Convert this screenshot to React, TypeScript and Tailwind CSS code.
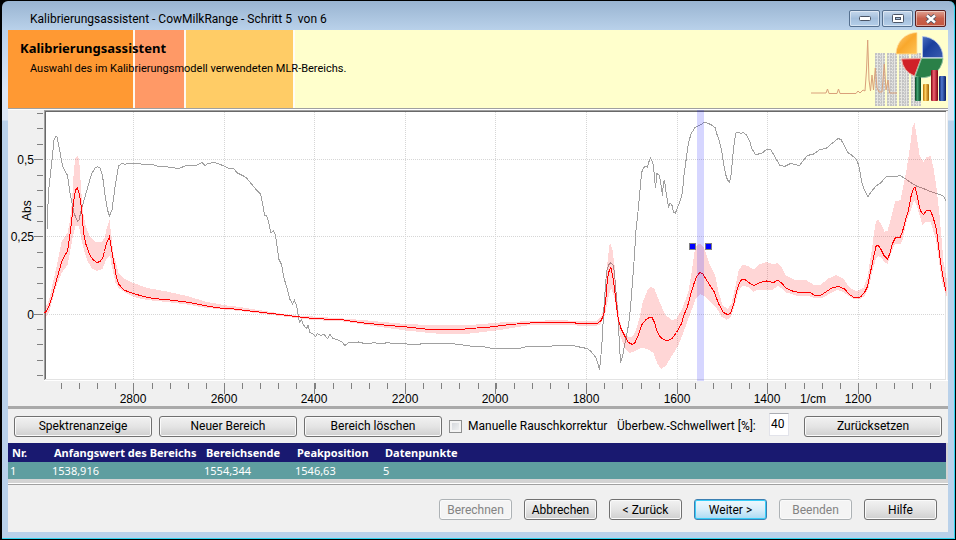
import type { ReactNode } from "react";

const SPECTRUM =
  "47,230 48.5,192 51.5,165 54,140 56,136.5 57,137 60,152 62.5,166 67.5,175.5 70,193 74,213 77.5,221.5 79,220 81.5,209 87.5,188 91.5,174 95,168 97.5,166.5 100,168 102.5,175.5 105,195 107.5,210 109.5,216 112,210 115,187 118.5,166 121,164 123,163.5 125.5,164.5 127,163.5 139.5,163.5 142,164.5 153,164.5 157,166 163,166 168,167 179,168.5 185,166 197,165 202,162.5 205,165.5 208,163.5 214,162.5 218,163.5 224,166 230,169 233.5,168.5 237.5,173 243.5,176 246.5,178 251.5,184 256.5,190 260.5,194 262.5,203 264.5,215.5 266,215 267.5,217.5 269.5,226.5 271,233 273.5,230.5 275.5,235.5 277.5,250 279,259.5 281.5,264.5 284,278 287.5,290 290,299.5 292.5,304 294.5,300.5 296.5,305 298.5,316.5 299.5,322.5 301.5,319.5 303.5,325 306.5,328.5 308,325.5 310,332.5 312.5,333.5 315.5,336.5 317.5,333.5 320.5,335.5 324,334.5 327.5,338.5 330,334.5 332.5,338 341.5,341.5 345,345.5 348.5,342.5 354,343 358.5,342 364.5,343.5 369,344 373.5,342.5 381.5,344 387.5,342.5 393,343.5 406.5,344 418,344.5 423,343.5 436,344 450,343.5 460,344.5 470,346 480,346 490,348 500,349 510,348.5 517,349 525,347 535,346 545,346.5 560,345.5 573,345.5 577,346.5 587,348.5 590.5,351 594.5,355.5 596.5,359 599.5,369.5 600.5,361 602,342 603.5,315 605,292 606.5,272 608.5,265 610.5,263 613,265 614.5,273 616,292 618,317 619.5,345 620.5,362.5 622.5,356.5 625,343 628.5,325 630.5,308 632.5,282 634.5,255 636,230 638.5,207 640.5,185 641.5,173 643.5,167.5 645.5,166.5 647.5,167 649,161.5 650.5,158 652,161 653.5,166 654.5,177 655.5,188 657,173.5 659.5,175.5 661,185 662.5,195.5 663.5,182 664.5,180.5 666,192 668.5,207 670,203 672,205.5 673.5,212 675.5,213 677.5,207.5 680,201.5 682.5,192 684,175 686.5,157 688.5,143 691,134 695,127.5 700,125 705,122 708.5,123.5 711.5,125 715,127.5 716.5,133 719,140 721.5,150 723.5,163 725.5,174 727.5,180 729.5,182.5 731.5,173 732.5,158 734.5,141 736,133 738.5,132.5 741,133.5 743.5,132.5 746.5,135 750,142 752,149 755.5,154.5 761.5,153.5 766.5,149.5 770.5,149.5 774,155 779.5,165 784.5,166.5 790.5,163.5 799.5,165.5 802.5,161.5 807.5,155.5 813.5,154 820,149.5 826,148.5 832.5,143 838,138.5 841,139.5 848.5,153.5 851,154.5 856,159 858.5,164.5 860.5,175 862.5,185 865.5,192.5 868,196.5 871.5,191.5 876,186 880.5,183 886.5,176.5 896.5,176.5 900,175.5 905,178.5 911.5,183 916.5,186 923.5,188.5 930,191.5 940,194.5 943.5,196.5 946.5,201.5";

const MEAN =
  "44.5,312.5 46.5,311.5 49.5,305 52.5,295 55.5,284 58.5,273 61.5,262.5 65,255 67.5,251.5 69.5,238 71.5,222 73.5,202 75.5,190 77.5,188 79.5,195 81.5,208 83.5,232 85.5,243 88,250 90.5,256.5 93.5,260 97,262.5 100,261.5 102.5,258.5 104.5,251.5 106.5,243.5 109.5,236.5 111.5,248.5 114,263.5 116,275 118.5,284 124,290 130,292.5 133.5,293.5 143.5,296.5 153.5,298.5 170,300 190,302.5 206.5,306 220,308 230,308.5 250,311 280,314.5 300,317 313.5,318.5 343.5,320 363.5,323 383.5,325 406.5,327 430,329.5 460,329.5 470,328.5 490,327 510,324.5 530,323 545,322 560,322.5 573,322.5 578,323.5 597.5,323.5 601.5,320 604,313 606,297 607.5,278 609.5,269.5 611,267.5 612.5,275 614.5,288 616.5,307 618.5,320 621,328.5 625,336.5 628.5,342.5 632.5,344.5 635,342.5 638.5,335 641.5,325 646,319.5 649.5,317.5 652,317.5 654.5,322.5 656.5,330 660.5,337.5 665,340 668.5,340.5 672.5,338 676.5,332.5 681.5,323.5 684,315 687.5,306.5 690.5,295 694,283.5 696.5,276.5 700,272.5 702.5,273.5 706.5,280 714,291.5 718.5,303.5 723.5,312.5 727.5,314.5 730.5,313.5 733.5,305 736.5,291.5 739.5,282.5 742,279.5 745.5,280 750,283.5 754.5,285.5 759.5,282.5 766.5,281 773.5,282.5 778,280 782,283.5 786,288 793.5,291.5 800,292.5 810,292.5 815,295.5 820.5,295.5 826.5,291.5 832.5,287.5 839,286.5 844.5,289 849.5,294.5 854,297.5 860.5,297 864.5,292.5 867.5,286.5 869.5,276.5 872,265 874,255 876,246.5 878,245 880.5,248.5 884,255.5 887.5,259 889.5,254.5 892.5,243.5 895.5,237.5 900,237.5 902.5,231.5 905.5,220 908.5,210 911,196.5 913.5,188.5 915,187.5 917,195 919,205 920.5,211 923.5,214.5 926.5,210.5 930.5,210.5 933.5,218.5 936.5,230 938.5,246 940.5,261.5 943.5,280 946,291";

const BAND_UPPER =
  "44.5,297 45.5,306 47,305 50,297 53,282 57,265 60,250 61.5,242 67.5,233 70,220 72,202 74,168 75.5,158 78,155 79.5,165 81,188 83.5,215 86,227 90,237 95,242 102,242 105,237 107,227 109.5,220 111.5,237 113.5,255 116,263 118.5,273 125,279 133.5,283 147,288 167,291.5 187,296 207,302 227,305.5 240,307 280,313.5 300,316 313,316.5 343,318.5 363,320 383,322 406,324 430,325 470,325 500,322.5 530,321 560,320 575,321 597,321 602,315 605,300 606,278 607.5,262 609.5,245 610.5,243.5 612.5,250 614.5,265 616.5,292 619.5,320 623,332 627.5,336.5 632.5,336.5 636,330 639.5,318 642.5,303 647.5,290.5 650.5,287 654.5,289 660,303 665,314.5 671.5,320 676.5,319 682.5,308 688.5,291.5 692,270 695,248 697,245 700.5,243.5 704,248 710,265 715,275 718.5,291.5 722.5,305 727.5,309 731.5,304 735,288 738.5,271 742.5,264.5 748.5,266.5 753.5,269.5 760,264 766.5,262 773,264 778,263 782,268 786,275.5 795,280 805,279.5 813.5,284.5 820,285 828.5,278.5 836,275 843.5,279 850,288 856.5,291 863.5,288 867.5,277 871.5,252 874,233.5 876,221 878.5,220 881.5,224.5 884.5,231.5 887.5,231 891.5,216.5 895,201.5 900.5,200 904,183 906.5,170 910,147 912.5,127 914.5,122.5 916.5,135 919.5,155 923.5,162 926.5,157 930.5,156 933.5,168 936.5,188 939.5,215 941.5,238 943.5,262 946.5,278";

const BAND_LOWER =
  "946.5,296 942,282 939,262 936,240 930.5,221.5 926.5,221.5 922.5,225 919.5,215 916.5,205 914,200.5 911.5,208 906.5,222 902.5,240 900.5,244 895,244 891.5,252 887.5,263.5 885,263 881.5,258 878,256 875.5,260 871.5,275 869,286.5 865,295.5 860,299 853,298.5 848,295.5 843,292 837,290 830,293.5 823,297.5 815,298.5 810,296.5 797,296 786.5,292.5 778,285.5 773,289.5 758,289.5 753,292 750,288 742.5,285.5 738.5,291.5 734,308 730.5,317.5 726.5,319.5 721.5,316.5 716.5,308 710,301 703.5,295.5 700,294 696,298 690.5,313 685,328 678.5,345 671.5,356.5 666,365.5 661.5,369 657.5,364 653.5,353 647.5,349 641.5,348 635,351 629.5,353 625,348 620.5,336.5 617.5,320 614.5,298 611,288 608.5,297 605,315 600.5,324.5 596.5,325.5 577,325.5 560,324.5 530,325 500,330 470,333.5 446.5,334.5 430,333 406.5,330.5 380,327 343.5,321.5 313,320 280,316 240,311 207,308 187,304.5 167,302 147,300 133.5,297 125,292.5 118.5,288 115.5,282.5 111.5,265 110,255 106,260 102.5,269 97,271 91.5,268 87,260 84,250 81.5,240 79,226 75.5,226 72.5,238 69.5,255 67.5,265 61.5,273 55,290 49.5,311 46.5,316 44.5,321";

const X_TICKS = [133, 224, 314, 405, 495, 586, 677, 767, 858];
const X_MINOR = Array.from({ length: 49 }, (_, i) => Math.round(61 + i * 18.11));
const X_LABELS = ["2800", "2600", "2400", "2200", "2000", "1800", "1600", "1400", "1200"];
const Y_TICKS = [
  { y: 159, label: "0,5" },
  { y: 236, label: "0,25" },
  { y: 314, label: "0" },
];
const Y_MINOR = [113, 128, 144, 175, 190, 206, 221, 252, 267, 283, 298, 329, 344, 360, 375];

function Chart() {
  return (
    <svg viewBox="8 110 940 296" className="block h-auto w-full bg-[#f0f0f0]" role="img" aria-label="Spektrum">
      <g shapeRendering="crispEdges">
        <rect x="45" y="111" width="901" height="269" fill="#fff" />
        <path d="M133.5 112V379M224.5 112V379M314.5 112V379M405.5 112V379M495.5 112V379M586.5 112V379M677.5 112V379M767.5 112V379M858.5 112V379" stroke="#d6d6d6" strokeDasharray="1 1" />
        <path d="M47 159.5H945M47 236.5H945M47 314.5H945" stroke="#d6d6d6" strokeDasharray="1 1" />
        <path d="M44 110.5H948M44.5 110V380" stroke="#a0a0a0" />
        <path d="M45 111.5H946M45.5 111V379" stroke="#696969" />
        <path d="M45 379.5H946M945.5 112V380" stroke="#e3e3e3" />
        <path d="M44 380.5H948M946.5 112V381" stroke="#fff" />
        {X_MINOR.map((x) => (
          <rect key={x} x={x} y="383" width="1" height="6" fill="#808080" />
        ))}
        {X_TICKS.map((x) => (
          <rect key={x} x={x} y="383" width="1" height="11" fill="#808080" />
        ))}
        {Y_MINOR.map((y) => (
          <rect key={y} x="37" y={y} width="6" height="1" fill="#808080" />
        ))}
        {Y_TICKS.map((t) => (
          <rect key={t.y} x="34" y={t.y} width="9" height="1" fill="#808080" />
        ))}
        <polyline points={SPECTRUM} fill="none" stroke="#a0a0a0" />
        <polygon points={BAND_UPPER + " " + BAND_LOWER} fill="#ff0000" fillOpacity="0.16" />
        <polyline points={MEAN} fill="none" stroke="#ff0000" />
        <rect x="697" y="110" width="7" height="271" fill="#0000ff" fillOpacity="0.16" />
        <rect x="689.5" y="243.5" width="6" height="6" fill="#0000ff" stroke="#808080" />
        <rect x="705.5" y="243.5" width="6" height="6" fill="#0000ff" stroke="#808080" />
      </g>
      <g className="font-['Liberation_Sans',Arial,sans-serif] text-[12px]" fill="#000">
        {X_TICKS.map((x, i) => (
          <text key={x} x={x} y="403" textAnchor="middle">
            {X_LABELS[i]}
          </text>
        ))}
        <text x="813" y="403" textAnchor="middle">
          1/cm
        </text>
        {Y_TICKS.map((t) => (
          <text key={t.y} x="34" y={t.y + 5} textAnchor="end">
            {t.label}
          </text>
        ))}
        <text transform="translate(31 221) rotate(-90)">Abs</text>
      </g>
    </svg>
  );
}

function Logo() {
  return (
    <svg width="138" height="78" viewBox="810 30 138 78" className="ml-auto shrink-0" aria-hidden="true">
      <defs>
        <pattern id="digits" width="12" height="3" patternUnits="userSpaceOnUse" x="875" y="53">
          <rect width="10" height="3" fill="#e6e6e2" />
          <path d="M0 1H2M3 1H5M6 1H7M8 1H10" stroke="#a2a2a6" />
          <path d="M0 2H1M3 2H4M5 2H7M8 2H9" stroke="#bcbcc0" />
        </pattern>
        <linearGradient id="pieYellow" x1="0" y1="0" x2="1" y2="1">
          <stop offset="0" stopColor="#ffd080" />
          <stop offset="0.5" stopColor="#f9a82c" />
          <stop offset="1" stopColor="#ffc456" />
        </linearGradient>
        <linearGradient id="pieBlue" x1="0" y1="0" x2="1" y2="1">
          <stop offset="0" stopColor="#4a6fc0" />
          <stop offset="0.4" stopColor="#1a3f9c" />
          <stop offset="1" stopColor="#3a5cb0" />
        </linearGradient>
        <linearGradient id="barGreen">
          <stop offset="0" stopColor="#064020" />
          <stop offset="0.4" stopColor="#3fa070" />
          <stop offset="1" stopColor="#064020" />
        </linearGradient>
        <linearGradient id="barYellow">
          <stop offset="0" stopColor="#b87000" />
          <stop offset="0.4" stopColor="#ffd060" />
          <stop offset="1" stopColor="#a06000" />
        </linearGradient>
        <linearGradient id="barRed">
          <stop offset="0" stopColor="#800010" />
          <stop offset="0.4" stopColor="#f06070" />
          <stop offset="1" stopColor="#800010" />
        </linearGradient>
        <linearGradient id="barBlue">
          <stop offset="0" stopColor="#081c60" />
          <stop offset="0.4" stopColor="#5078d0" />
          <stop offset="1" stopColor="#081c60" />
        </linearGradient>
      </defs>
      <rect x="875" y="53" width="46" height="53" fill="url(#digits)" />
      <path
        d="M811 93H826L827.5 89L829 93.5H837L838.5 89L840 93.5H856L858 91L860 93L863 90L865 91L866.5 70L867.7 40L869 80L870.5 91L872 75L873.5 90L875.3 68L877 88L879 92H882L884.3 64L886 90L888 80L889.5 93H897"
        fill="none"
        stroke="#d9a07a"
        strokeWidth="1"
      />
      <path d="M917 32.5V54H896A21 21.5 0 0 1 917 32.5Z" fill="url(#pieYellow)" stroke="#ffe0a0" strokeWidth="0.8" />
      <path d="M922.5 36.5A21 21 0 0 1 943 57.5H922.5Z" fill="url(#pieBlue)" stroke="#b8c8e8" strokeWidth="0.8" />
      <path d="M901.5 59L921 58.5L914.5 76A21 21 0 0 1 901.5 59Z" fill="#d02028" stroke="#f0a8a0" strokeWidth="1" />
      <path d="M921.5 58.5H943A21 21 0 0 1 915 76.5Z" fill="#2a8048" stroke="#8fc0a0" strokeWidth="1" />
      <rect x="915" y="77" width="6" height="24" rx="1" fill="url(#barGreen)" />
      <rect x="923" y="84" width="6" height="17" rx="1" fill="url(#barYellow)" />
      <rect x="931" y="70" width="7" height="31" rx="1" fill="url(#barRed)" />
      <rect x="939" y="76" width="7" height="25" rx="1" fill="url(#barBlue)" />
    </svg>
  );
}

function CaptionButton({ label, close, children }: { label: string; close?: boolean; children: ReactNode }) {
  const tone = close
    ? "border-[#5a1f1f] bg-linear-to-b from-[#dfa394] via-[#c8604c] via-50% to-[#c5573f]"
    : "border-[#55708f] bg-linear-to-b from-[#c6d8ec] via-[#a4bfdc] via-50% to-[#b5cfe9]";
  return (
    <button
      type="button"
      aria-label={label}
      className={"flex h-[17px] w-[31px] items-center justify-center rounded-[2px] border shadow-[inset_0_0_0_1px_rgba(255,255,255,0.45)] " + tone}
    >
      {children}
    </button>
  );
}

function PushButton({ children, size, variant = "normal" }: { children: ReactNode; size: "wide" | "small"; variant?: "normal" | "primary" | "disabled" }) {
  const tones = {
    normal: "border-[#707070] bg-linear-to-b from-[#f2f2f2] via-[#e4e4e4] via-50% to-[#cfcfcf] text-black shadow-[inset_0_0_0_1px_#fafafa]",
    primary: "border-[#3c7fb1] bg-linear-to-b from-[#eff8fd] via-[#d8eefa] via-50% to-[#aadaf3] text-black shadow-[inset_0_0_0_1px_#36cdf8]",
    disabled: "border-[#adb2b5] bg-[#f4f4f4] text-[#838383] shadow-[inset_0_0_0_1px_#fafafa]",
  };
  const sizes = { wide: "w-[138px]", small: "w-[73px]" };
  return (
    <button
      type="button"
      disabled={variant === "disabled"}
      className={"flex h-[21px] shrink-0 items-center justify-center rounded-[3px] border text-[12px] whitespace-nowrap " + sizes[size] + " " + tones[variant]}
    >
      {children}
    </button>
  );
}

export default function App() {
  return (
    <div className="flex min-h-screen flex-col bg-black pt-px pr-px pb-px pl-[2px] font-[Roboto,'Noto_Sans',sans-serif] text-[12px] text-black">
      <div className="flex grow flex-col rounded-t-[6px] border-r border-b border-[#2fd3ee] bg-[linear-gradient(#99b4d1,#b9d1ea_29px,#dce7f5_90px,#dce7f5_119px,#b9d1ea_120px)] px-[6px] pb-[6px]">
        <header className="flex h-[29px] items-center">
          <h1 className="pt-[7px] pl-[22px] text-[12px] leading-[16px] whitespace-pre">Kalibrierungsassistent - CowMilkRange - Schritt 5  von 6</h1>
          <div className="ml-auto flex gap-[2px] pt-[6px] pr-[2px]">
            <CaptionButton label="Minimieren">
              <svg width="12" height="5" viewBox="0 0 12 5">
                <rect x="0.5" y="0.5" width="11" height="4" rx="1" fill="#fff" stroke="#4b5566" />
              </svg>
            </CaptionButton>
            <CaptionButton label="Maximieren">
              <svg width="12" height="9" viewBox="0 0 12 9">
                <rect x="0.5" y="0.5" width="11" height="8" rx="1" fill="#fff" stroke="#4b5566" />
                <rect x="3.5" y="3.5" width="5" height="2" fill="#a4bfdc" stroke="#4b5566" />
              </svg>
            </CaptionButton>
            <CaptionButton label="Schließen" close>
              <svg width="12" height="10" viewBox="0 0 12 10">
                <path d="M2 1.5L10 8.5M10 1.5L2 8.5" stroke="#4b5566" strokeWidth="4.2" />
                <path d="M2 1.5L10 8.5M10 1.5L2 8.5" stroke="#fff" strokeWidth="2.4" />
              </svg>
            </CaptionButton>
          </div>
        </header>

        <main className="flex grow flex-col bg-[#f0f0f0]">
          <section className="relative flex h-[78px] bg-[#ffffcc]">
            <div className="w-[127px] border-r-2 border-[#fff8ee] bg-[#ff9933]" />
            <div className="w-[51px] border-r-2 border-[#fff8ee] bg-[#ff9966]" />
            <div className="w-[109px] border-r-2 border-[#fffdf4] bg-[#ffcc66]" />
            <Logo />
            <div className="absolute top-[9px] left-3">
              <h2 className="font-['Noto_Sans',sans-serif] text-[13px] leading-[18px] font-bold">Kalibrierungsassistent</h2>
              <p className="mt-1 ml-[10px] text-[11px] leading-[16px]">Auswahl des im Kalibrierungsmodell verwendeten MLR-Bereichs.</p>
            </div>
          </section>
          <div className="h-[2px] border-t border-[#a0a0a0] bg-white" />

          <Chart />

          <div className="h-[3px] bg-[#a9a9a9]" />

          <section className="flex h-[34px] items-center px-[6px]">
            <div className="flex gap-[7px]">
              <PushButton size="wide">Spektrenanzeige</PushButton>
              <PushButton size="wide">Neuer Bereich</PushButton>
              <PushButton size="wide">Bereich löschen</PushButton>
            </div>
            <input
              id="noise"
              type="checkbox"
              className="ml-[7px] size-[13px] shrink-0 appearance-none border border-[#8e8f8f] bg-linear-to-br from-[#cfd3d8] to-[#f6f6f6] shadow-[inset_0_0_0_2px_#f4f4f4]"
            />
            <label htmlFor="noise" className="w-[155px] shrink-0 pl-[6px] whitespace-nowrap">
              Manuelle Rauschkorrektur
            </label>
            <label htmlFor="threshold" className="w-[152px] shrink-0 whitespace-nowrap">
              Überbew.-Schwellwert [%]:
            </label>
            <input
              id="threshold"
              type="text"
              defaultValue="40"
              className="mb-1 h-[23px] w-[20px] shrink-0 border border-[#e2e3ea] border-t-[#abadb3] bg-white pl-px text-[12px] outline-none"
            />
            <div className="ml-auto">
              <PushButton size="wide">Zurücksetzen</PushButton>
            </div>
          </section>

          <section className="bg-[#d4d4d4] pr-[2px] pb-1">
            <table className="w-full table-fixed border-collapse text-left font-['Noto_Sans',sans-serif] text-[11px]">
              <colgroup>
                <col className="w-[42px]" />
                <col className="w-[152px]" />
                <col className="w-[91px]" />
                <col className="w-[88px]" />
                <col />
              </colgroup>
              <thead className="bg-[#191970] text-white">
                <tr className="h-[19px] leading-[15px] whitespace-nowrap">
                  <th className="p-0 pl-1">Nr.</th>
                  <th className="p-0 pl-1">Anfangswert des Bereichs</th>
                  <th className="p-0 pl-1">Bereichsende</th>
                  <th className="p-0 pl-1">Peakposition</th>
                  <th className="p-0 pl-1">Datenpunkte</th>
                </tr>
              </thead>
              <tbody className="bg-[#5f9ea0] text-white">
                <tr className="h-[17px] leading-[15px]">
                  <td className="p-0 pl-[2px]">1</td>
                  <td className="p-0 pl-[2px]">1538,916</td>
                  <td className="p-0 pl-[2px]">1554,344</td>
                  <td className="p-0 pl-[2px]">1546,63</td>
                  <td className="p-0 pl-[2px]">5</td>
                </tr>
              </tbody>
            </table>
          </section>
          <div className="h-[2px] border-b border-[#a0a0a0] bg-white" />

          <footer className="flex grow items-center justify-end gap-3 pt-[2px] pr-[11px]">
            <PushButton size="small" variant="disabled">Berechnen</PushButton>
            <PushButton size="small">Abbrechen</PushButton>
            <PushButton size="small">&lt; Zurück</PushButton>
            <PushButton size="small" variant="primary">Weiter &gt;</PushButton>
            <PushButton size="small" variant="disabled">Beenden</PushButton>
            <PushButton size="small">Hilfe</PushButton>
          </footer>
        </main>
      </div>
    </div>
  );
}
